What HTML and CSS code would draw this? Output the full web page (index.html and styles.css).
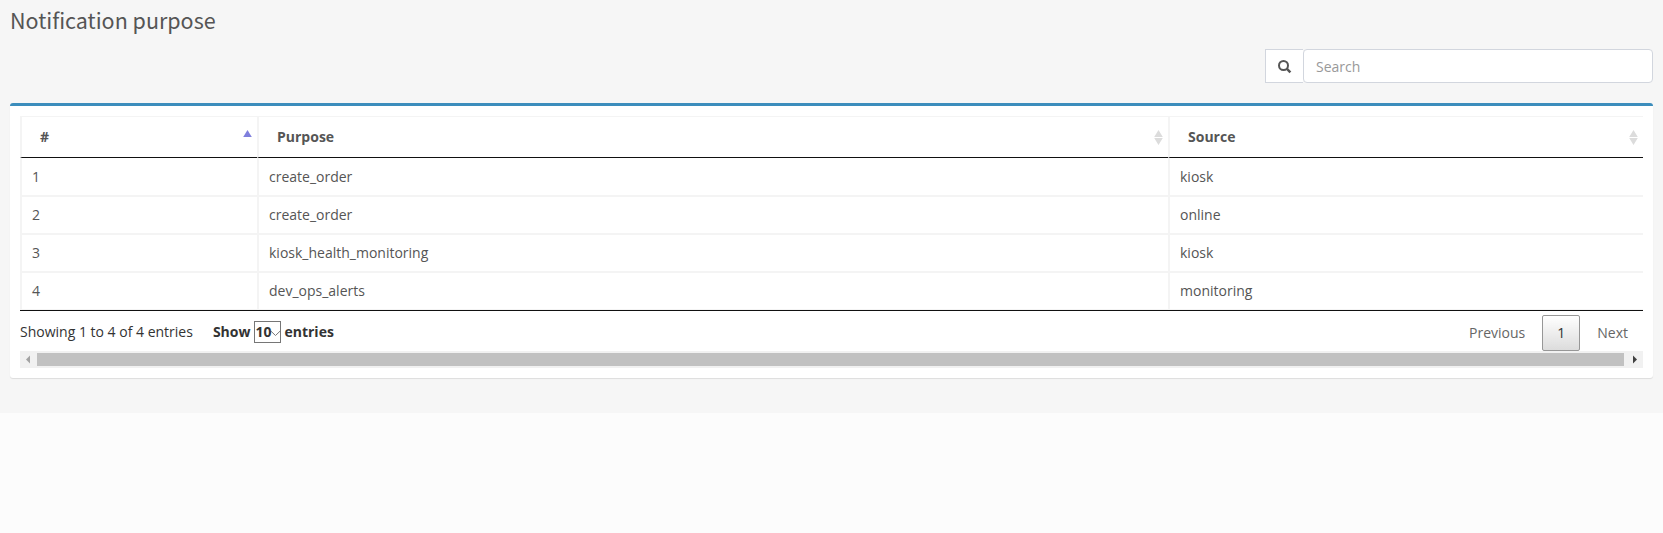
FILE: index.html
```html
<!DOCTYPE html>
<html lang="en">
<head>
<meta charset="utf-8">
<title>Notification purpose</title>
<link rel="stylesheet" href="styles.css">
</head>
<body>
<main class="content">
  <h1 class="title">Notification purpose</h1>
  <div class="search">
    <span class="search-addon">
      <svg width="14" height="15" viewBox="0 0 14 15" fill="none" stroke="#555" stroke-width="2"><circle cx="5.5" cy="6.5" r="4.5"/><path d="M8.7 9.7L12.4 13.4" stroke-width="2.5"/></svg>
    </span>
    <input class="search-input" type="text" placeholder="Search">
  </div>
  <section class="box">
    <table class="grid">
      <colgroup><col class="col-id"><col class="col-purpose"><col></colgroup>
      <thead>
        <tr>
          <th><div class="head"><span>#</span><svg class="sort" width="9" height="16" viewBox="0 0 9 16"><path fill="#7f7fdd" d="M4.5 0L8.8 7H.2z"/></svg></div></th>
          <th><div class="head"><span>Purpose</span><svg class="sort" width="9" height="16" viewBox="0 0 9 16"><path fill="#dcdcdc" d="M4.5 0L8.8 7H.2zM.2 8h8.6L4.5 15z"/></svg></div></th>
          <th><div class="head"><span>Source</span><svg class="sort" width="9" height="16" viewBox="0 0 9 16"><path fill="#dcdcdc" d="M4.5 0L8.8 7H.2zM.2 8h8.6L4.5 15z"/></svg></div></th>
        </tr>
      </thead>
      <tbody>
        <tr><td>1</td><td>create_order</td><td>kiosk</td></tr>
        <tr><td>2</td><td>create_order</td><td>online</td></tr>
        <tr><td>3</td><td>kiosk_health_monitoring</td><td>kiosk</td></tr>
        <tr><td>4</td><td>dev_ops_alerts</td><td>monitoring</td></tr>
      </tbody>
    </table>
    <div class="footer">
      <span class="info">Showing 1 to 4 of 4 entries</span>
      <div class="length">
        <span>Show</span>
        <span class="select">10<svg width="11" height="7" viewBox="0 0 11 7" fill="none" stroke="#777"><path d="M.8 1L5.5 5.5L10.2 1"/></svg></span>
        <span>entries</span>
      </div>
      <nav class="pager">
        <span class="page">Previous</span>
        <span class="page current">1</span>
        <span class="page">Next</span>
      </nav>
    </div>
    <div class="scrollbar">
      <svg class="arrow" width="17" height="17" viewBox="0 0 17 17"><path fill="#a3a3a3" d="M10 4.5v8L6 8.5z"/></svg>
      <div class="thumb"></div>
      <svg class="arrow" width="17" height="17" viewBox="0 0 17 17"><path fill="#404040" d="M7 4.5v8l4-4z"/></svg>
    </div>
  </section>
</main>
</body>
</html>
```
FILE: styles.css
```css
* { box-sizing: border-box; }

body {
  margin: 0;
  background: #fcfcfc;
  color: #555;
  font: 14px/20px "Open Sans", sans-serif;
}

.content {
  height: 413px;
  padding: 0 10px;
  background: #f6f6f6;
}

.title {
  height: 49px;
  margin: 0;
  padding-top: 7px;
  font: 400 21.5px/26px "Noto Sans CJK SC", sans-serif;
}

.search {
  display: flex;
  width: 388px;
  height: 34px;
  margin: 0 0 20px auto;
}

.search-addon {
  display: flex;
  align-items: center;
  width: 38px;
  padding-left: 12px;
  border: 1px solid #d2d6de;
  border-right: 0;
  background: #fff;
}

.search-input {
  flex: 1;
  min-width: 0;
  padding: 8px 12px 6px;
  border: 1px solid #d2d6de;
  border-radius: 4px;
  background: #fff;
  font: inherit;
}

.search-input::placeholder { color: #999; }

.box {
  height: 275px;
  padding: 10px;
  border-top: 3px solid #3c8dbc;
  border-radius: 3px;
  background: #fff;
  box-shadow: 0 1px 1px rgba(0, 0, 0, .1);
}

.grid {
  width: 100%;
  table-layout: fixed;
  border-collapse: separate;
  border-spacing: 0;
  border-bottom: 1px solid #111;
}

.col-id { width: 237px; }
.col-purpose { width: 911px; }

th {
  height: 42px;
  padding: 0 5px 0 18px;
  border-top: 1px solid #f4f4f4;
  border-bottom: 1px solid #111;
  border-left: 2px solid #f4f4f4;
  text-align: left;
}

.head {
  display: flex;
  align-items: center;
  justify-content: space-between;
}

.sort { margin-top: 2px; }

td {
  height: 38px;
  padding: 0 10px;
  border-bottom: 2px solid #f4f4f4;
  border-left: 2px solid #f4f4f4;
}

tbody tr:first-child td { height: 39px; }
tbody tr:last-child td { height: 37px; border-bottom-width: 1px; }

.footer {
  display: flex;
  align-items: flex-start;
  height: 40px;
  padding-top: 4px;
  color: #333;
}

.info { padding-top: 7px; }

.length {
  display: flex;
  gap: 4px;
  margin-left: 20px;
  padding-top: 6px;
  font-weight: 700;
  line-height: 22px;
}

.select {
  display: flex;
  align-items: center;
  width: 27px;
  height: 22px;
  margin-right: -1px;
  border: 1px solid #767676;
  line-height: 20px;
}

.select svg { flex: none; margin: 2px 0 0 -1px; }

.pager {
  display: flex;
  gap: 2px;
  margin-left: auto;
  color: #666;
}

.page {
  height: 36px;
  padding: 7px 14px;
  border: 1px solid transparent;
}

.current {
  border-color: #979797;
  border-radius: 2px;
  background: linear-gradient(#fff, #dcdcdc);
  color: #333;
}

.scrollbar {
  display: flex;
  height: 17px;
  background: #f1f1f1;
}

.thumb {
  flex: 1;
  margin: 2px 2px 2px 0;
  background: #c1c1c1;
}
```
